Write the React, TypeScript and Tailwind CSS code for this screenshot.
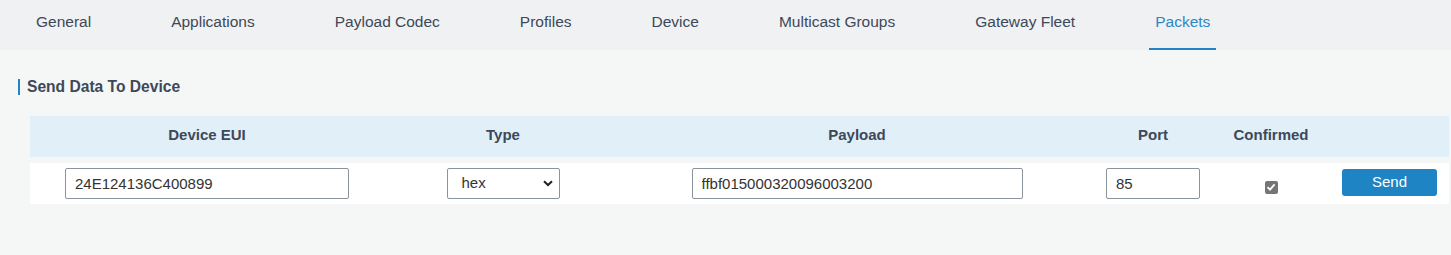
import { useState } from 'react';

const tabs = [
  'General',
  'Applications',
  'Payload Codec',
  'Profiles',
  'Device',
  'Multicast Groups',
  'Gateway Fleet',
  'Packets',
];

export default function App() {
  const [active, setActive] = useState('Packets');
  const [eui, setEui] = useState('24E124136C400899');
  const [type, setType] = useState('hex');
  const [payload, setPayload] = useState('ffbf015000320096003200');
  const [port, setPort] = useState('85');
  const [confirmed, setConfirmed] = useState(true);

  return (
    <div
      className="w-[1451px] h-[255px] bg-[#f5f7f7] text-[#3d4859] overflow-hidden"
      style={{ fontFamily: '"Liberation Sans", Arial, sans-serif' }}
    >
      {/* Tabs */}
      <div className="h-[50px] bg-[#f0f1f3] flex pl-[30px] gap-[68px]">
        {tabs.map((tab) => (
          <button
            key={tab}
            onClick={() => setActive(tab)}
            className={`relative h-full flex items-center pb-[6px] px-[6px] text-[15.5px] ${
              active === tab ? 'text-[#2d87c8]' : 'text-[#3d4859]'
            }`}
          >
            {tab}
            {active === tab && (
              <span className="absolute left-0 right-0 bottom-0 h-[2px] bg-[#2183c4]" />
            )}
          </button>
        ))}
      </div>

      {/* Section title */}
      <div className="pl-[18px] pt-[29px] flex items-center">
        <span className="w-[2px] h-[16px] bg-[#2183c4]" />
        <h3 className="ml-[7px] text-[15.6px] font-bold leading-[16px] text-[#3d4859]">
          Send Data To Device
        </h3>
      </div>

      {/* Table */}
      <div className="ml-[30px] mt-[21px] w-[1419px]">
        <div className="grid grid-cols-[354px_238px_470px_122px_114px_1fr] h-[41px] bg-[#e1eff9] items-center text-[15px] font-bold text-[#3d4859] pb-[2px]">
          <div className="text-center">Device EUI</div>
          <div className="text-center">Type</div>
          <div className="text-center">Payload</div>
          <div className="text-center">Port</div>
          <div className="text-center">Confirmed</div>
          <div />
        </div>
        <div className="mt-[6px] grid grid-cols-[354px_238px_470px_122px_114px_1fr] h-[41px] bg-white items-center text-[15px] text-[#333]">
          <div className="flex justify-center">
            <input
              value={eui}
              onChange={(e) => setEui(e.target.value)}
              className="w-[284px] h-[31px] border border-[#8a949c] rounded-[2px] px-[9px] outline-none"
            />
          </div>
          <div className="flex justify-center">
            <div className="relative w-[113px]">
              <select
                value={type}
                onChange={(e) => setType(e.target.value)}
                className="appearance-none w-full h-[31px] border border-[#8a949c] rounded-[2px] pl-[14px] bg-white outline-none"
              >
                <option value="hex">hex</option>
                <option value="base64">base64</option>
              </select>
              <svg
                className="absolute right-[7px] top-[12px] pointer-events-none"
                width="10"
                height="7"
                viewBox="0 0 10 7"
              >
                <path d="M1 1.2 L5 5 L9 1.2" fill="none" stroke="#222" strokeWidth="2" />
              </svg>
            </div>
          </div>
          <div className="flex justify-center">
            <input
              value={payload}
              onChange={(e) => setPayload(e.target.value)}
              className="w-[331px] h-[31px] border border-[#8a949c] rounded-[2px] px-[9px] outline-none"
            />
          </div>
          <div className="flex justify-center">
            <input
              value={port}
              onChange={(e) => setPort(e.target.value)}
              className="w-[94px] h-[31px] border border-[#8a949c] rounded-[2px] px-[9px] outline-none"
            />
          </div>
          <div className="flex justify-center pt-[7px]">
            <button
              onClick={() => setConfirmed(!confirmed)}
              className={`w-[13px] h-[13px] rounded-[2px] flex items-center justify-center ${
                confirmed ? 'bg-[#757575]' : 'bg-white border border-[#767676]'
              }`}
            >
              {confirmed && (
                <svg width="10" height="10" viewBox="0 0 10 10">
                  <path d="M1.5 5.2 L4 7.6 L8.6 2.4" fill="none" stroke="#fff" strokeWidth="1.8" />
                </svg>
              )}
            </button>
          </div>
          <div className="flex pl-[14px]">
            <button className="w-[95px] h-[27px] rounded-[3px] bg-[#1f84c4] text-white text-[15px] -mt-[2px]">
              Send
            </button>
          </div>
        </div>
      </div>
    </div>
  );
}
